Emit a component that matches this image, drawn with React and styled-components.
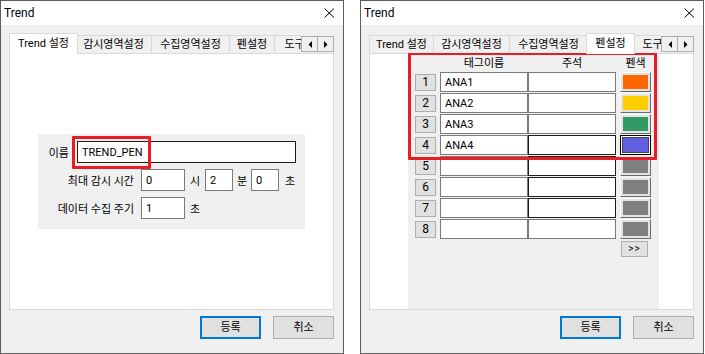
import React from "react";
import styled, { createGlobalStyle } from "styled-components";

const FONT = `Roboto, "Noto Sans CJK KR", sans-serif`;

const GlobalStyle = createGlobalStyle`
  html, body { margin: 0; padding: 0; background: #fff; }
  body {
    font-family: ${FONT};
    font-size: 11px;
    color: #000;
  }
  * { box-sizing: border-box; }
`;

const Page = styled.div`
  display: flex;
  gap: 16px;
  width: 705px;
  height: 354px;
`;

const Window = styled.div`
  flex: none;
  width: 344px;
  height: 354px;
  border: 1px solid #5e5e5e;
  display: flex;
  flex-direction: column;
  background: #f0f0f0;
`;

const TitleBar = styled.div`
  flex: none;
  height: 24px;
  background: #fff;
  display: flex;
  align-items: center;
  justify-content: space-between;
  padding: 0 8px 0 3px;
`;

const Title = styled.span`
  font-size: 12px;
  line-height: 1;
`;

const Body = styled.div`
  flex: 1;
  display: flex;
  flex-direction: column;
  padding: 8px 9px 14px 8px;
`;

const TabRow = styled.div`
  display: flex;
  align-items: flex-end;
  height: 21px;
  margin-bottom: -1px;
  position: relative;
  z-index: 1;
`;

const TabList = styled.div`
  flex: 1;
  min-width: 0;
  display: flex;
  align-items: flex-end;
  height: 21px;
  overflow: hidden;
`;

const Tab = styled.div`
  flex: none;
  width: ${(p) => p.$w + (p.$active ? 4 : 0)}px;
  height: ${(p) => (p.$active ? 21 : 18)}px;
  margin: 0 ${(p) => (p.$active ? -2 : 0)}px ${(p) => (p.$active ? 0 : 1)}px
    ${(p) => (p.$active && !p.$first ? -2 : 0)}px;
  border: 1px solid #d9d9d9;
  border-bottom: none;
  border-left-width: ${(p) => (p.$first || p.$active ? 1 : 0)}px;
  background: ${(p) => (p.$active ? "#fff" : "#f0f0f0")};
  position: relative;
  z-index: ${(p) => (p.$active ? 2 : 1)};
  display: flex;
  align-items: center;
  justify-content: center;
  white-space: nowrap;
  font-size: 11px;
  line-height: 1;
  padding-bottom: ${(p) => (p.$active ? 2 : 0)}px;
`;

const Arrows = styled.div`
  flex: none;
  display: flex;
  margin-bottom: 2px;
`;

const ArrowBtn = styled.div`
  width: 17px;
  height: 16px;
  border: 1px solid #adadad;
  margin-left: ${(p) => (p.$second ? -1 : 0)}px;
  background: #f0f0f0;
  display: flex;
  align-items: center;
  justify-content: center;
`;

const Panel = styled.div`
  flex: none;
  height: 257px;
  border: 1px solid #d9d9d9;
  background: #fff;
  display: flex;
  align-items: ${(p) => (p.$center ? "center" : "stretch")};
  justify-content: ${(p) => (p.$center ? "center" : "flex-start")};
`;

const ButtonRow = styled.div`
  display: flex;
  justify-content: flex-end;
  gap: 12px;
  margin-top: 6px;
`;

const DlgButton = styled.button`
  width: 61px;
  height: 23px;
  padding: 0;
  background: #e1e1e1;
  border: ${(p) => (p.$primary ? "2px solid #0078d7" : "1px solid #adadad")};
  font-family: ${FONT};
  font-size: 11px;
  color: #000;
  line-height: 1;
`;

/* ---------- Left window content ---------- */

const Group = styled.div`
  position: relative;
  width: 267px;
  height: 95px;
  background: #f0f0f0;
  padding-top: 7px;
  display: flex;
  flex-direction: column;
  gap: 6px;
`;

const FieldRow = styled.div`
  display: flex;
  align-items: center;
  height: 22px;
`;

const Label = styled.span`
  flex: none;
  width: ${(p) => p.$w}px;
  margin-right: ${(p) => p.$gap}px;
  text-align: right;
  white-space: nowrap;
`;

const TextBox = styled.div`
  flex: none;
  width: ${(p) => p.$w}px;
  height: ${(p) => p.$h || 22}px;
  border: 1px solid ${(p) => (p.$dark ? "#1e1e1e" : "#7a7a7a")};
  background: #fff;
  padding-left: 4px;
  display: flex;
  align-items: center;
  font-size: 11px;
  line-height: 1;
  white-space: nowrap;
  overflow: hidden;
`;

const Unit = styled.span`
  flex: none;
  width: ${(p) => p.$w}px;
  text-align: ${(p) => (p.$left ? "left" : "center")};
  padding-left: ${(p) => p.$pl || 0}px;
`;

const Highlight = styled.div`
  position: absolute;
  left: ${(p) => p.$x}px;
  top: ${(p) => p.$y}px;
  width: ${(p) => p.$w}px;
  height: ${(p) => p.$h}px;
  border: 3px solid #ec1c24;
  border-radius: 1px;
  pointer-events: none;
`;

/* ---------- Right window content ---------- */

const PenArea = styled.div`
  position: relative;
  margin-left: 38px;
  width: 251px;
  background: #f0f0f0;
  padding-left: 7px;
  display: flex;
  flex-direction: column;
`;

const HeaderRow = styled.div`
  display: flex;
  align-items: center;
  height: 18px;
`;

const HeaderCell = styled.span`
  flex: none;
  width: ${(p) => p.$w}px;
  margin-left: ${(p) => p.$ml || 0}px;
  text-align: center;
  line-height: 1;
`;

const PenRows = styled.div`
  display: flex;
  flex-direction: column;
  gap: 1px;
`;

const PenRow = styled.div`
  display: flex;
  align-items: center;
  height: 20px;
`;

const NumBtn = styled.div`
  flex: none;
  width: 21px;
  height: 17px;
  margin-right: 4px;
  background: #e1e1e1;
  border: 1px solid #adadad;
  display: flex;
  align-items: center;
  justify-content: center;
  font-size: 12px;
  line-height: 1;
`;

const ColorBtn = styled.div`
  flex: none;
  width: 31px;
  height: 20px;
  margin-left: 4px;
  padding: ${(p) => (p.$focus ? 1 : 2)}px;
  border: 1px solid;
  border-color: ${(p) =>
    p.$focus ? "#000" : "#f8f8f8 #6b6b6b #6b6b6b #f8f8f8"};
  background: ${(p) => (p.$focus ? "#fff" : "#e3e3e3")};
`;

const Swatch = styled.div`
  width: 100%;
  height: 100%;
  background: ${(p) => p.$c};
  border: ${(p) => (p.$focus ? "1px solid #444" : "none")};
`;

const MoreBtn = styled.div`
  width: 27px;
  height: 16px;
  margin: 2px 0 0 206px;
  background: #e1e1e1;
  border: 1px solid #adadad;
  display: flex;
  align-items: center;
  justify-content: center;
  font-size: 10px;
  letter-spacing: 1px;
  line-height: 1;
`;

const CloseIcon = () => (
  <svg width="11" height="10" viewBox="0 0 11 10">
    <path d="M0.5 0.5 L10 9.5 M10 0.5 L0.5 9.5" stroke="#000" strokeWidth="1" fill="none" />
  </svg>
);

const ArrowIcon = ({ dir }) => (
  <svg width="4" height="7" viewBox="0 0 4 7">
    {dir === "left" ? (
      <path d="M4 0 L0.5 3.5 L4 7 Z" fill="#000" />
    ) : (
      <path d="M0 0 L3.5 3.5 L0 7 Z" fill="#000" />
    )}
  </svg>
);

const TABS = [
  { label: "Trend 설정", w: 65 },
  { label: "감시영역설정", w: 76 },
  { label: "수집영역설정", w: 78 },
  { label: "펜설정", w: 45 },
  { label: "도구", w: 40 },
];

const TrendDialog = ({ active, children, center }) => (
  <Window>
    <TitleBar>
      <Title>Trend</Title>
      <CloseIcon />
    </TitleBar>
    <Body>
      <TabRow>
        <TabList>
          {TABS.map((t, i) => (
            <Tab key={t.label} $w={t.w} $active={i === active} $first={i === 0}>
              {t.label}
            </Tab>
          ))}
        </TabList>
        <Arrows>
          <ArrowBtn>
            <ArrowIcon dir="left" />
          </ArrowBtn>
          <ArrowBtn $second>
            <ArrowIcon dir="right" />
          </ArrowBtn>
        </Arrows>
      </TabRow>
      <Panel $center={center}>{children}</Panel>
      <ButtonRow>
        <DlgButton $primary>등록</DlgButton>
        <DlgButton>취소</DlgButton>
      </ButtonRow>
    </Body>
  </Window>
);

const PENS = [
  { n: 1, tag: "ANA1", color: "#ff6600" },
  { n: 2, tag: "ANA2", color: "#ffcc00" },
  { n: 3, tag: "ANA3", color: "#339966" },
  { n: 4, tag: "ANA4", color: "#6060e0", focus: true, dark: true },
  { n: 5, tag: "", color: "#808080", dark: true },
  { n: 6, tag: "", color: "#808080", dark: true },
  { n: 7, tag: "", color: "#808080", dark: true },
  { n: 8, tag: "", color: "#808080" },
];

export default function App() {
  return (
    <>
      <GlobalStyle />
      <Page>
        <TrendDialog active={0} center>
          <Group>
            <FieldRow>
              <Label $w={31} $gap={8}>이름</Label>
              <TextBox $w={219} $dark>TREND_PEN</TextBox>
            </FieldRow>
            <FieldRow>
              <Label $w={96} $gap={7}>최대 감시 시간</Label>
              <TextBox $w={44}>0</TextBox>
              <Unit $w={20}>시</Unit>
              <TextBox $w={28}>2</TextBox>
              <Unit $w={18}>분</Unit>
              <TextBox $w={28}>0</TextBox>
              <Unit $w={20} $left $pl={6}>초</Unit>
            </FieldRow>
            <FieldRow>
              <Label $w={96} $gap={7}>데이터 수집 주기</Label>
              <TextBox $w={44}>1</TextBox>
              <Unit $w={20} $left $pl={5}>초</Unit>
            </FieldRow>
            <Highlight $x={34} $y={2} $w={79} $h={33} />
          </Group>
        </TrendDialog>

        <TrendDialog active={3}>
          <PenArea>
            <HeaderRow>
              <HeaderCell $w={88} $ml={25}>태그이름</HeaderCell>
              <HeaderCell $w={88}>주석</HeaderCell>
              <HeaderCell $w={31} $ml={4}>펜색</HeaderCell>
            </HeaderRow>
            <PenRows>
              {PENS.map((p) => (
                <PenRow key={p.n}>
                  <NumBtn>{p.n}</NumBtn>
                  <TextBox $w={88} $h={20}>{p.tag}</TextBox>
                  <TextBox $w={88} $h={20} $dark={p.dark} />
                  <ColorBtn $focus={p.focus}>
                    <Swatch $c={p.color} $focus={p.focus} />
                  </ColorBtn>
                </PenRow>
              ))}
            </PenRows>
            <MoreBtn>&gt;&gt;</MoreBtn>
            <Highlight $x={0} $y={-2} $w={249} $h={108} />
          </PenArea>
        </TrendDialog>
      </Page>
    </>
  );
}
